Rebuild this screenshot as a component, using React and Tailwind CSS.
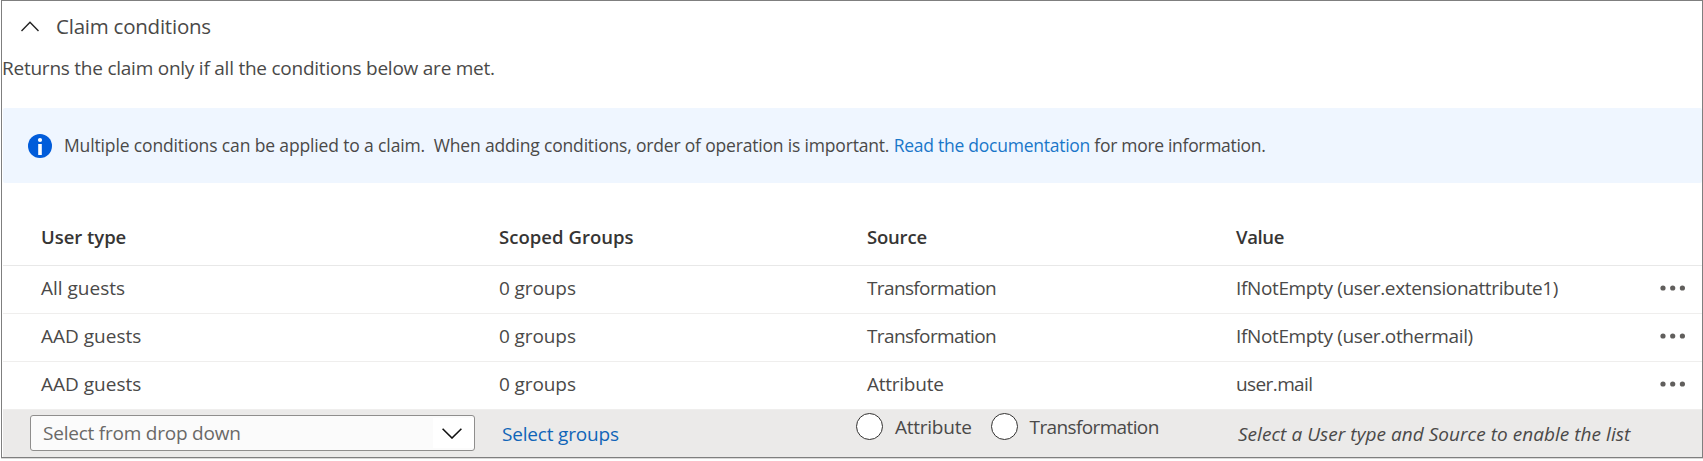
import clsx from 'clsx';

const rows = [
  { user: 'All guests', source: 'Transformation', value: 'IfNotEmpty (user.extensionattribute1)' },
  { user: 'AAD guests', source: 'Transformation', value: 'IfNotEmpty (user.othermail)' },
  { user: 'AAD guests', source: 'Attribute', value: 'user.mail' },
];

const columns = 'grid grid-cols-[458px_368px_369px_1fr] pl-[38px]';

function SourceText({ children }) {
  return (
    <span className={children === 'Transformation' ? 'tracking-[-0.63px]' : 'tracking-[-0.25px]'}>{children}</span>
  );
}

function MoreIcon() {
  return (
    <svg width="26" height="6" viewBox="0 0 26 6" fill="#605e5c" aria-hidden="true">
      <circle cx="3" cy="3" r="2.6" />
      <circle cx="12.7" cy="3" r="2.6" />
      <circle cx="22.4" cy="3" r="2.6" />
    </svg>
  );
}

function InfoIcon() {
  return (
    <svg width="24" height="24" viewBox="0 0 24 24" aria-hidden="true">
      <circle cx="12" cy="12" r="12" fill="#015cda" />
      <circle cx="12" cy="6" r="2.1" fill="#fff" />
      <rect x="10.2" y="10" width="3.6" height="11" fill="#fff" />
    </svg>
  );
}

function Radio({ children }) {
  return (
    <label className="flex items-center">
      <span className="size-[27px] shrink-0 rounded-full border border-[#323130] bg-white" />
      <span className="ml-3 whitespace-nowrap">
        <SourceText>{children}</SourceText>
      </span>
    </label>
  );
}

export default function App() {
  return (
    <div className="h-[461px] w-[1703px] overflow-hidden bg-white pl-px font-['Open_Sans',sans-serif] text-[19px] leading-[26px] text-[#4a4948]">
      <section className="h-[458px] border border-[#7f7f7f] pl-px shadow-[0_1px_0_#dad9d8]">
        <h2 className="flex h-[50px] items-center pl-[18px] text-[20.5px] tracking-[-0.23px]">
          <svg width="18" height="11" viewBox="0 0 18 11" fill="none" stroke="#222" strokeWidth="1.4" aria-hidden="true">
            <path d="M0.5 10 L9 1.2 L17.5 10" />
          </svg>
          <span className="ml-[17px]">Claim conditions</span>
        </h2>
        <p className="-ml-px mt-[4px] h-[53px] tracking-[-0.24px]">Returns the claim only if all the conditions below are met.</p>

        <div className="flex h-[75px] items-center rounded-[2px] bg-[#eff6ff] pl-[25px] text-[17.5px]">
          <InfoIcon />
          <p className="ml-[12px] whitespace-pre pb-[2px]">
            <span className="tracking-[-0.14px]">{'Multiple conditions can be applied to a claim.  '}</span>
            <span className="tracking-[-0.18px]">{'When adding conditions, order of operation is important. '}</span>
            <a href="#docs" className="tracking-[-0.25px] text-[#1a77c9]">Read the documentation</a>
            <span className="tracking-[-0.3px]"> for more information.</span>
          </p>
        </div>

        <div className={clsx(columns, 'mt-[26px] h-[57px] items-center border-b border-[#e8e8e8] text-[18.5px] font-semibold text-[#363534]')}>
          <span className="tracking-[-0.04px]">User type</span>
          <span className="tracking-[0.04px]">Scoped Groups</span>
          <span className="tracking-[-0.2px]">Source</span>
          <span className="tracking-[-0.35px]">Value</span>
        </div>

        {rows.map((row, i) => (
          <div key={i} className={clsx(columns, 'h-[48px] items-center border-b border-[#efeeed]')}>
            <span className="pb-[4px]">{row.user}</span>
            <span className="pb-[4px] tracking-[-0.1px]">0 groups</span>
            <div className="pb-[4px]">
              <SourceText>{row.source}</SourceText>
            </div>
            <div className="flex items-center justify-between pb-[4px] pr-[16px]">
              <span className={row.value === 'user.mail' ? 'tracking-[-0.6px]' : 'tracking-[-0.36px]'}>{row.value}</span>
              <MoreIcon />
            </div>
          </div>
        ))}

        <div className="grid h-[47px] grid-cols-[472px_354px_382px_1fr] bg-[#ebeae9] pl-[27px]">
          <div className="mt-[5px] flex h-[36px] w-[445px] items-center rounded-[3px] border border-[#8f8e8d] bg-[#fbfbfb] pl-3 text-[#6a6967]">
            <span className="grow tracking-[-0.22px]">Select from drop down</span>
            <span className="flex h-[30px] w-[41px] items-center bg-white pl-[9px]">
              <svg width="20" height="11" viewBox="0 0 20 11" fill="none" stroke="#111" strokeWidth="1.6" aria-hidden="true">
                <path d="M0.6 0.8 L10 10 L19.4 0.8" />
              </svg>
            </span>
          </div>
          <a href="#groups" className="mt-[11px] tracking-[-0.18px] text-[#1065b8]">Select groups</a>
          <div className="mt-[3px] flex h-[27px] items-center gap-[19px]">
            <Radio>Attribute</Radio>
            <Radio>Transformation</Radio>
          </div>
          <em className="mt-[11px] tracking-[0.04px]">Select a User type and Source to enable the list</em>
        </div>
      </section>
    </div>
  );
}
